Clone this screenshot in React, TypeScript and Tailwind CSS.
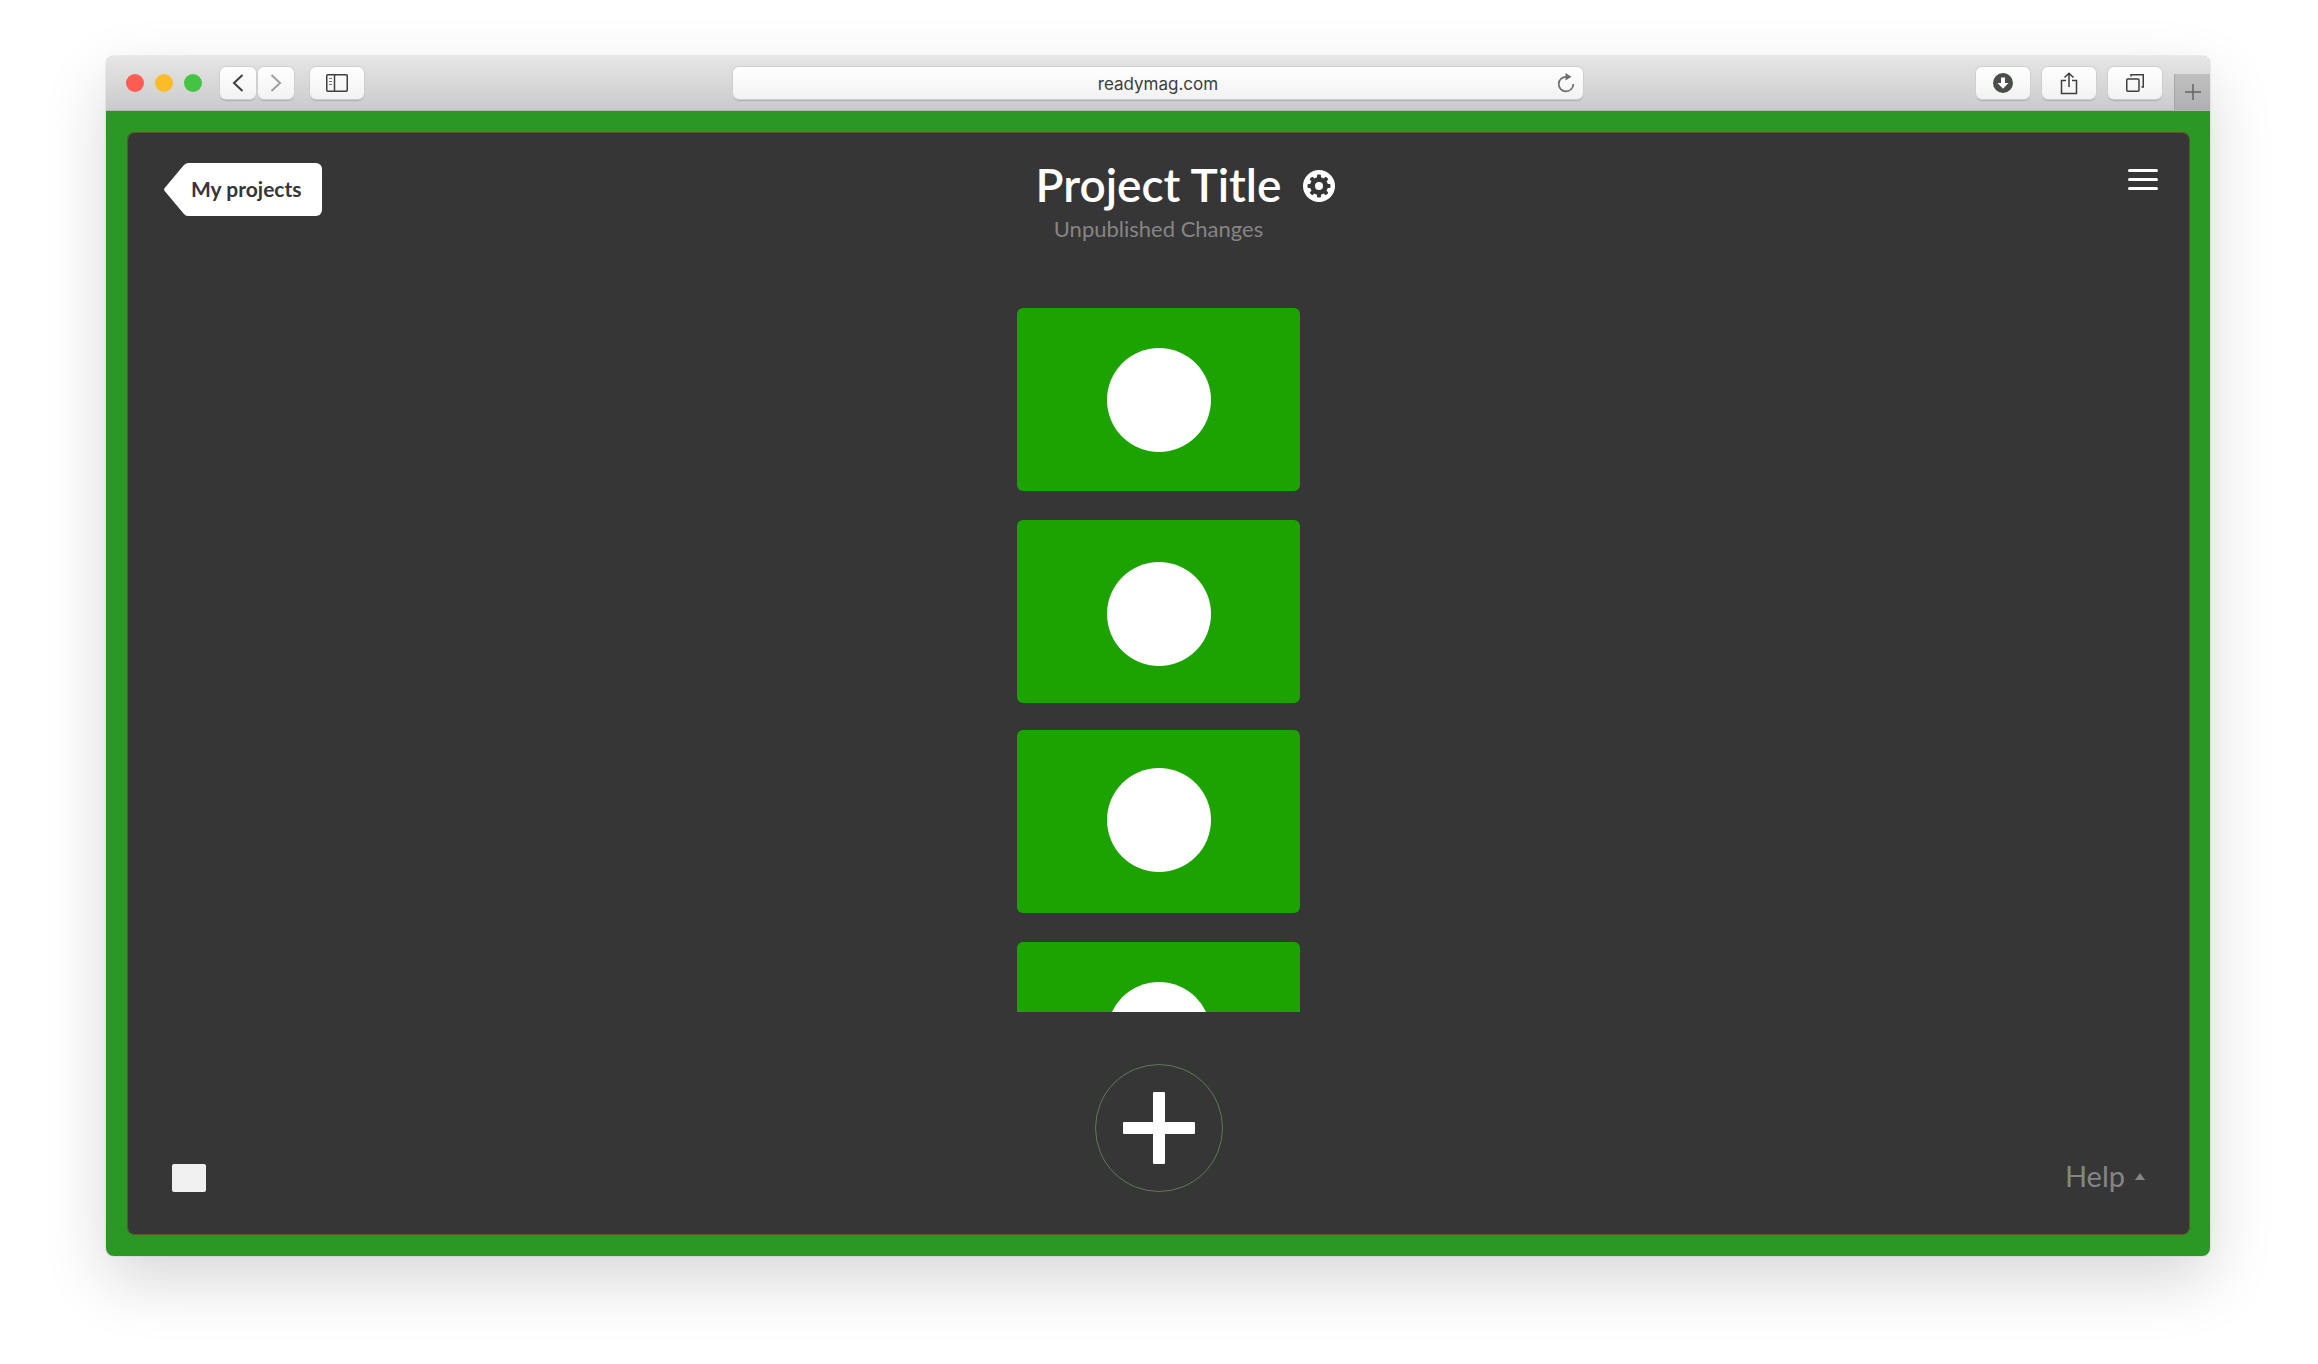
import type { ReactNode } from "react";

const pages = [
  { id: 1, card: "pt-[40px]" },
  { id: 2, card: "mt-[29px] pt-[42px]" },
  { id: 3, card: "mt-[27px] pt-[38px]" },
  { id: 4, card: "mt-[29px] pt-[40px]" },
];

const gearTeeth = [0, 45, 90, 135, 180, 225, 270, 315];

function ToolButton({ label, wide, children }: { label: string; wide?: boolean; children: ReactNode }) {
  return (
    <button
      type="button"
      aria-label={label}
      className={`flex h-8 shrink-0 items-center justify-center rounded-md bg-linear-to-b from-white to-[#f2f2f2] shadow-[0_0_0_1px_#cfcfcf,0_2px_1px_#b0b0b0] ${wide ? "w-[54px]" : "w-9"}`}
    >
      {children}
    </button>
  );
}

function Toolbar() {
  return (
    <div className="grid h-[55px] shrink-0 grid-cols-[1fr_minmax(0,850px)_1fr] rounded-t-lg border-b border-[#b5b5b5] bg-linear-to-b from-[#e6e6e6] to-[#cbcbcb]">
      <div className="flex items-center pl-5">
        <div className="flex gap-[11px]">
          <button type="button" aria-label="Close" className="size-[18px] rounded-full bg-[#fe5b53]" />
          <button type="button" aria-label="Minimize" className="size-[18px] rounded-full bg-[#fcbc2a]" />
          <button type="button" aria-label="Zoom" className="size-[18px] rounded-full bg-[#43c443]" />
        </div>
        <div className="ml-[18px] flex gap-[2px]">
          <ToolButton label="Back">
            <svg width="12" height="18" viewBox="0 0 12 18" fill="none" stroke="#3c3f3c" strokeWidth="2">
              <path d="M10.500 1 2 9l8.500 8" />
            </svg>
          </ToolButton>
          <ToolButton label="Forward">
            <svg width="12" height="18" viewBox="0 0 12 18" fill="none" stroke="#a0a0a0" strokeWidth="2">
              <path d="M1.500 1 10 9l-8.500 8" />
            </svg>
          </ToolButton>
        </div>
        <div className="ml-4 flex">
          <ToolButton label="Sidebar" wide>
            <svg width="22" height="18" viewBox="0 0 22 18" fill="none" stroke="#3c3f3c">
              <rect x="0.750" y="0.750" width="20.500" height="16.500" rx="1" strokeWidth="1.500" />
              <path d="M8.500 1v16" strokeWidth="1.500" />
              <path d="M3 4.500h3M3 7.500h3M3 10.500h3" strokeWidth="1.200" stroke="#777" />
            </svg>
          </ToolButton>
        </div>
      </div>

      <div className="relative self-center">
        <input
          type="text"
          aria-label="Address"
          defaultValue="readymag.com"
          className="block h-8 w-full rounded-md bg-linear-to-b from-white to-[#f2f2f2] pt-[2px] text-center font-['Inter',sans-serif] text-[17px] text-[#3c3f3c] shadow-[0_0_0_1px_#cfcfcf,0_2px_1px_#b0b0b0] outline-none"
        />
        <button type="button" aria-label="Reload" className="absolute top-[6px] right-2">
          <svg width="18" height="20" viewBox="0 0 18 20" fill="none" stroke="#6c6f6c" strokeWidth="1.700">
            <path d="M9.500 3.800A7.300 7.300 0 1 0 16.300 11" />
            <path d="M8.500 0v7.500L14.500 3.800z" fill="#6c6f6c" stroke="none" />
          </svg>
        </button>
      </div>

      <div className="flex items-center justify-end">
        <div className="mr-3 flex gap-3">
          <ToolButton label="Downloads" wide>
            <svg width="20" height="20" viewBox="0 0 20 20">
              <circle cx="10" cy="10" r="10" fill="#4a4d4a" />
              <path d="M8 4.500h4V10h3.500L10 15.800 4.500 10H8z" fill="#fff" />
            </svg>
          </ToolButton>
          <ToolButton label="Share" wide>
            <svg width="18" height="23" viewBox="0 0 18 23" fill="none" stroke="#3c3f3c" strokeWidth="1.500">
              <path d="M6 8.500H1.500v13h15v-13H12M9 15V1.500M4.500 5.500 9 1.200l4.500 4.300" />
            </svg>
          </ToolButton>
          <ToolButton label="Show tabs" wide>
            <svg width="18" height="18" viewBox="0 0 18 18" fill="none" stroke="#3c3f3c" strokeWidth="1.500">
              <rect x="0.750" y="5" width="12.250" height="12.250" rx="1" />
              <path d="M5 2.500V.750h12.250V13H15.500" />
            </svg>
          </ToolButton>
        </div>
        <button
          type="button"
          aria-label="New tab"
          className="flex h-9 w-9 items-center justify-center self-end border-l border-[#a5a5a5] bg-linear-to-b from-[#c0c0c0] to-[#b0b0b0]"
        >
          <svg width="16" height="16" viewBox="0 0 16 16" stroke="#636663" strokeWidth="1.500">
            <path d="M8 0v16M0 8h16" />
          </svg>
        </button>
      </div>
    </div>
  );
}

function Header() {
  return (
    <header className="grid h-[175px] shrink-0 grid-cols-[1fr_auto_1fr] items-start">
      <a href="#projects" className="mt-[30px] ml-9 flex h-[53px] w-max items-stretch text-[#363636]">
        <svg width="24" height="53" viewBox="0 0 24 53" fill="#fff" aria-hidden="true">
          <path d="M24 0Q21.500 0 19.500 2.500L.700 25Q-.400 26.500.700 28l18.800 22.500Q21.500 53 24 53z" />
        </svg>
        <span className="flex items-center rounded-r-md bg-white pr-5 pb-[2px] pl-[3px] text-[21px] font-bold">
          My projects
        </span>
      </a>

      <div className="mt-[25px] text-center">
        <div className="relative mx-auto w-max">
          <h1 className="text-[46px] leading-[54px] font-semibold text-white">Project Title</h1>
          <button type="button" aria-label="Project settings" className="absolute top-3 left-full ml-[22px]">
            <svg width="32" height="32" viewBox="0 0 32 32">
              <circle cx="16" cy="16" r="16" fill="#fff" />
              <circle cx="16" cy="16" r="9" fill="#363636" />
              {gearTeeth.map((angle) => (
                <rect
                  key={angle}
                  x="14"
                  y="4.500"
                  width="4"
                  height="6"
                  rx="1"
                  fill="#363636"
                  transform={`rotate(${angle} 16 16)`}
                />
              ))}
              <circle cx="16" cy="16" r="4" fill="#fff" />
            </svg>
          </button>
        </div>
        <p className="mt-[3px] text-[22px] leading-7 text-[#858585]">Unpublished Changes</p>
      </div>

      <button type="button" aria-label="Menu" className="mt-9 mr-[31px] flex flex-col gap-[6px] justify-self-end">
        <span className="h-[3px] w-[30px] rounded-full bg-white" />
        <span className="h-[3px] w-[30px] rounded-full bg-white" />
        <span className="h-[3px] w-[30px] rounded-full bg-white" />
      </button>
    </header>
  );
}

export default function App() {
  return (
    <div className="flex h-screen flex-col bg-white pt-14 pr-[108px] pb-[108px] pl-[106px] font-['Lato',sans-serif]">
      <div className="flex min-h-0 flex-1 flex-col rounded-lg shadow-[0_24px_64px_rgba(0,0,0,0.160),0_0_1px_rgba(0,0,0,0.600)]">
        <Toolbar />
        <div className="flex min-h-0 flex-1 rounded-b-lg bg-[#2b9724] p-[22px] pr-[21px]">
          <main className="flex min-w-0 flex-1 flex-col rounded-md bg-[#363636] outline outline-[#565a1a]">
            <Header />
            <div className="flex min-h-0 flex-1 flex-col items-center overflow-hidden">
              {pages.map((page) => (
                <button
                  key={page.id}
                  type="button"
                  aria-label={`Page ${page.id}`}
                  className={`flex h-[183px] w-[283px] shrink-0 items-start justify-center rounded-md bg-[#1ca300] ${page.card}`}
                >
                  <span className="size-[104px] rounded-full bg-white" />
                </button>
              ))}
            </div>
            <footer className="grid shrink-0 grid-cols-[1fr_auto_1fr] items-end px-11 pt-[52px] pb-[42px]">
              <button type="button" aria-label="Page view" className="h-7 w-[34px] rounded-xs bg-[#f0f0f0]" />
              <button
                type="button"
                aria-label="Add page"
                className="flex size-32 items-center justify-center rounded-full border border-[#5f7a58]"
              >
                <svg width="72" height="72" viewBox="0 0 72 72" fill="#fff">
                  <rect x="30" y="0" width="12" height="72" rx="1" />
                  <rect x="0" y="30" width="72" height="12" rx="1" />
                </svg>
              </button>
              <button type="button" className="flex items-center gap-[10px] justify-self-end text-[29px] leading-8 text-[#858585]">
                Help
                <svg width="10" height="7" viewBox="0 0 10 7" fill="#858585">
                  <path d="M5 0l5 7H0z" />
                </svg>
              </button>
            </footer>
          </main>
        </div>
      </div>
    </div>
  );
}
